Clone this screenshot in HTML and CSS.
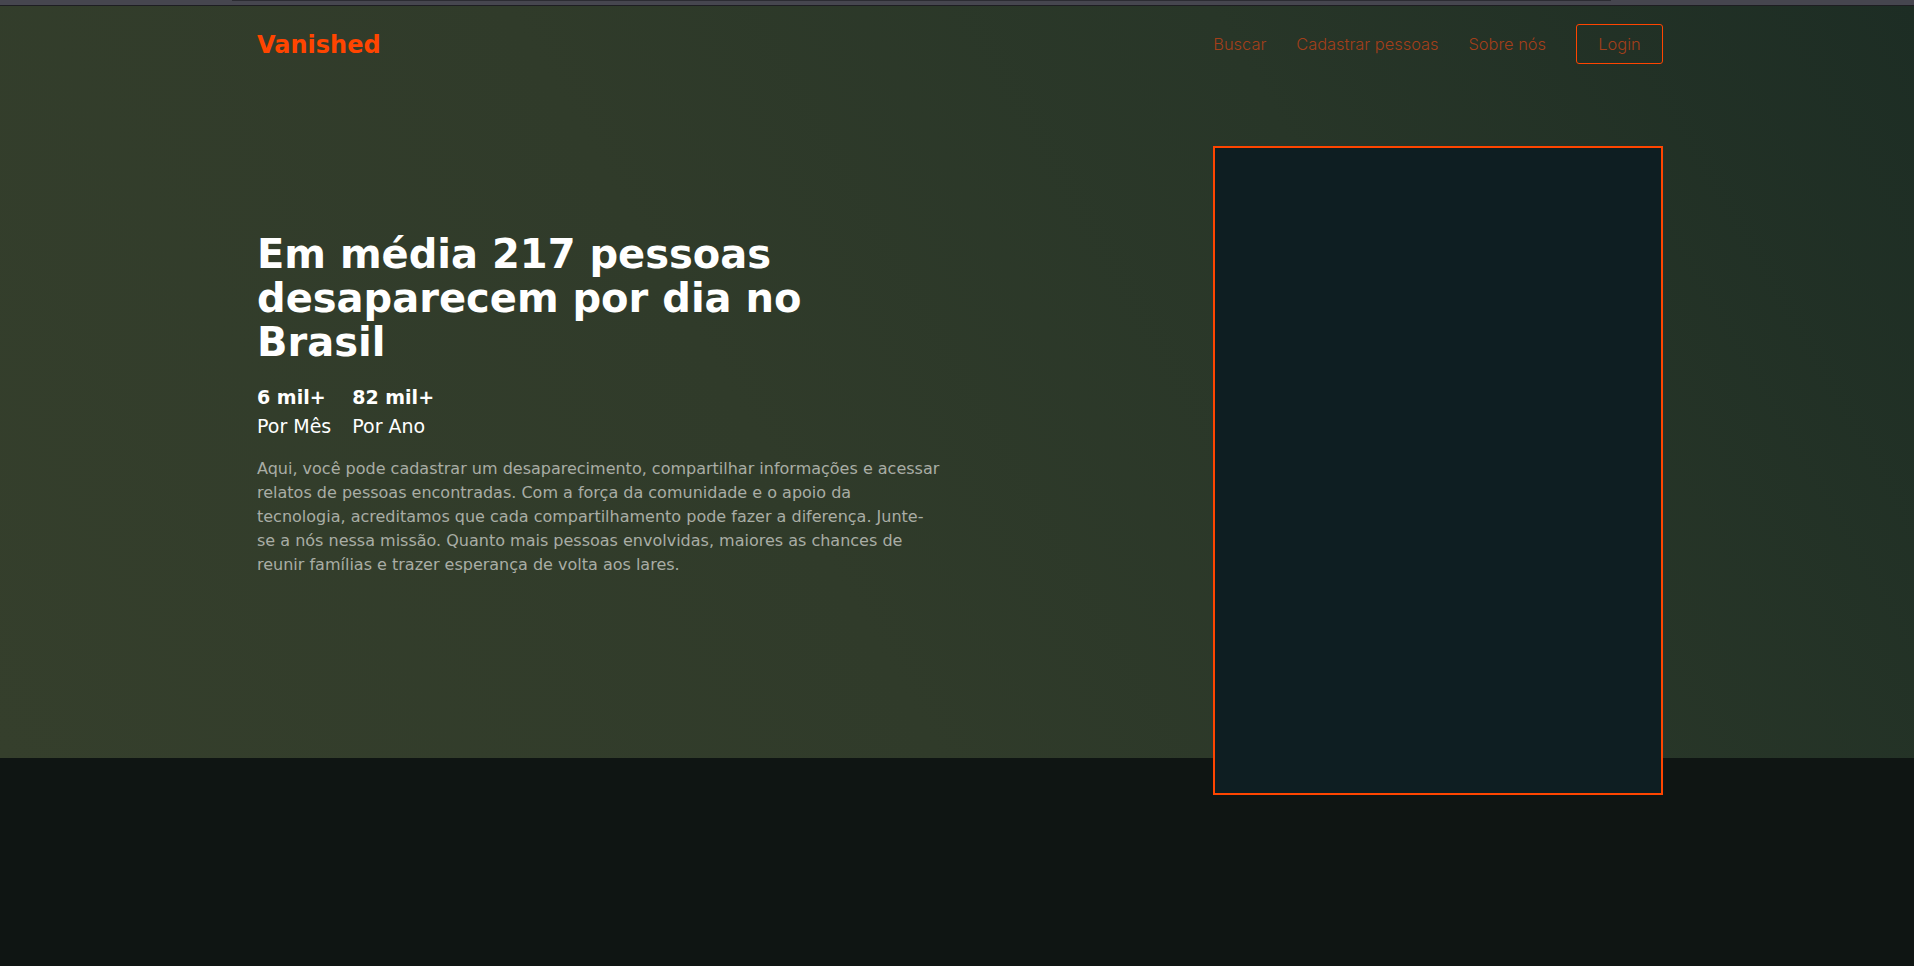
FILE: index.html
```html
<!DOCTYPE html>
<html lang="pt-BR">
<head>
<meta charset="utf-8">
<title>Vanished</title>
<link rel="stylesheet" href="styles.css">
</head>
<body>
<div class="topbar"><div class="topbar-thumb"></div></div>
<section class="hero">
  <div class="container">
    <header class="header">
      <a class="logo" href="#">Vanished</a>
      <nav class="nav">
        <a class="nav-link" href="#">Buscar</a>
        <a class="nav-link" href="#">Cadastrar pessoas</a>
        <a class="nav-link" href="#">Sobre nós</a>
        <a class="nav-login" href="#">Login</a>
      </nav>
    </header>
    <div class="hero-content">
      <div class="hero-text">
        <h1 class="title">Em média 217 pessoas desaparecem por dia no Brasil</h1>
        <div class="stats">
          <div class="stat">
            <span class="stat-num">6 mil+</span>
            <span class="stat-label">Por Mês</span>
          </div>
          <div class="stat">
            <span class="stat-num">82 mil+</span>
            <span class="stat-label">Por Ano</span>
          </div>
        </div>
        <p class="lead">Aqui, você pode cadastrar um desaparecimento, compartilhar informações e acessar relatos de pessoas encontradas. Com a força da comunidade e o apoio da tecnologia, acreditamos que cada compartilhamento pode fazer a diferença. Junte-se a nós nessa missão. Quanto mais pessoas envolvidas, maiores as chances de reunir famílias e trazer esperança de volta aos lares.</p>
      </div>
      <div class="hero-frame"></div>
    </div>
  </div>
</section>
<section class="below"></section>
</body>
</html>
```
FILE: styles.css
```css
* { box-sizing: border-box; }
html, body { margin: 0; padding: 0; }
body {
  background: #0f1513;
  font-family: "DejaVu Sans", sans-serif;
  color: #ffffff;
  min-height: 966px;
}
.topbar {
  height: 6px;
  background: #46464f;
  border-bottom: 1px solid #1e1e22;
  padding-left: 232px;
}
.topbar-thumb {
  width: 1379px;
  height: 1px;
  background: #2c2c33;
}
.hero {
  height: 752px;
  background: linear-gradient(60deg, #353f2c 0%, #303b2a 40%, #283628 70%, #1d2d24 100%);
}
.container {
  width: 1412px;
  margin: 0 auto;
  padding-left: 6px;
}
.header {
  display: flex;
  align-items: center;
  justify-content: space-between;
  padding-top: 18px;
  height: 58px;
}
.logo {
  color: #ff4500;
  font-weight: bold;
  font-size: 24px;
  text-decoration: none;
  line-height: 1;
  padding-top: 2px;
}
.nav {
  display: flex;
  align-items: center;
  gap: 30px;
  font-family: Inter, "Open Sans", sans-serif;
  font-weight: 300;
  font-size: 16.4px;
}
.nav-link, .nav-login {
  color: #a33f1a;
  text-decoration: none;
}
.nav-login {
  display: flex;
  align-items: center;
  justify-content: center;
  width: 87px;
  height: 40px;
  border: 1.5px solid #ff4500;
  border-radius: 3px;
}
.hero-content {
  display: flex;
  justify-content: space-between;
  align-items: flex-start;
  padding-top: 82px;
}
.hero-text {
  width: 684px;
  padding-top: 86px;
}
.title {
  margin: 0;
  max-width: 600px;
  font-size: 40px;
  line-height: 44px;
  font-weight: bold;
}
.stats {
  display: flex;
  gap: 21px;
  margin-top: 19px;
}
.stat {
  display: flex;
  flex-direction: column;
}
.stat-num {
  font-weight: bold;
  font-size: 19px;
  line-height: 29px;
}
.stat-label {
  font-size: 19px;
  line-height: 29px;
}
.lead {
  margin: 16px 0 0;
  font-size: 16px;
  line-height: 24px;
  color: #a9ada5;
}
.hero-frame {
  width: 450px;
  height: 649px;
  border: 2px solid #ff4500;
  background: #0e1e22;
}
.below {
  height: 208px;
  background: #0f1513;
}
```
